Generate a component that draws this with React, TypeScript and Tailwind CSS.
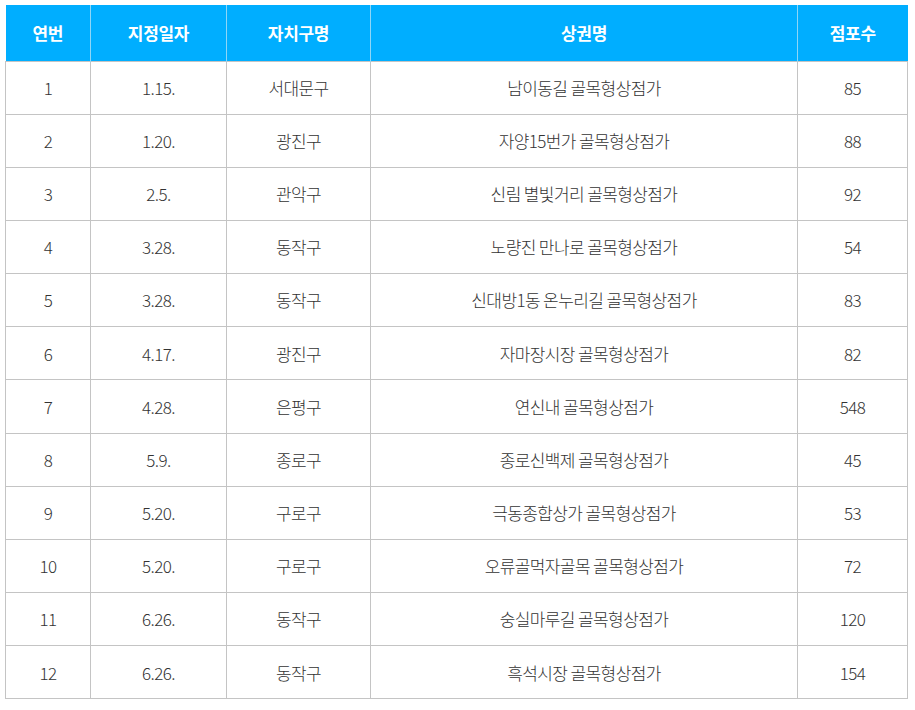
import React from "react";

const ROWS: [number, string, string, string, number][] = [
  [1, "1.15.", "서대문구", "남이동길 골목형상점가", 85],
  [2, "1.20.", "광진구", "자양15번가 골목형상점가", 88],
  [3, "2.5.", "관악구", "신림 별빛거리 골목형상점가", 92],
  [4, "3.28.", "동작구", "노량진 만나로 골목형상점가", 54],
  [5, "3.28.", "동작구", "신대방1동 온누리길 골목형상점가", 83],
  [6, "4.17.", "광진구", "자마장시장 골목형상점가", 82],
  [7, "4.28.", "은평구", "연신내 골목형상점가", 548],
  [8, "5.9.", "종로구", "종로신백제 골목형상점가", 45],
  [9, "5.20.", "구로구", "극동종합상가 골목형상점가", 53],
  [10, "5.20.", "구로구", "오류골먹자골목 골목형상점가", 72],
  [11, "6.26.", "동작구", "숭실마루길 골목형상점가", 120],
  [12, "6.26.", "동작구", "흑석시장 골목형상점가", 154],
];

const HEADERS = ["연번", "지정일자", "자치구명", "상권명", "점포수"];

export default function App() {
  return (
    <div className="bg-white p-[5px] font-['Noto_Sans_CJK_KR','Noto_Sans',sans-serif]">
      <table className="w-[902px] table-fixed border-collapse text-center">
        <colgroup>
          <col className="w-[85px]" />
          <col className="w-[136px]" />
          <col className="w-[144px]" />
          <col className="w-[427px]" />
          <col className="w-[110px]" />
        </colgroup>
        <thead>
          <tr className="h-[56px] bg-[#00aeff]">
            {HEADERS.map((h, i) => (
              <th
                key={h}
                className={`text-[17px] font-bold text-white tracking-[-0.3px] ${
                  i > 0 ? "border-l border-[#8fd6f7]" : ""
                }`}
              >
                {h}
              </th>
            ))}
          </tr>
        </thead>
        <tbody className="text-[17px] font-light text-[#333] tracking-[-0.6px]">
          {ROWS.map((r) => (
            <tr key={r[0]} className="h-[53.17px]">
              {r.map((v, i) => (
                <td key={i} className="border border-[#c4c4c4]">
                  {v}
                </td>
              ))}
            </tr>
          ))}
        </tbody>
      </table>
    </div>
  );
}
